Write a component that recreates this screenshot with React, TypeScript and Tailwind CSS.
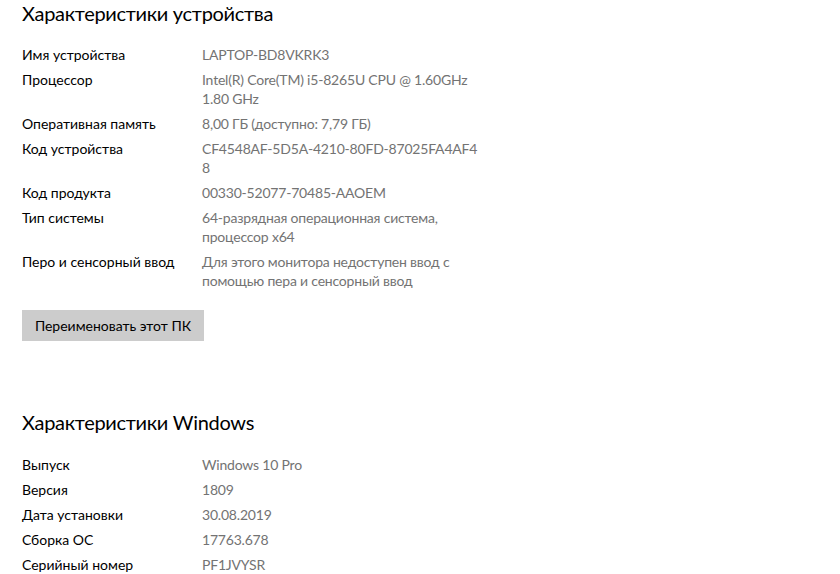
import React from "react";

type Row = { label: string; value: string[] };

const device: Row[] = [
  { label: "Имя устройства", value: ["LAPTOP-BD8VKRK3"] },
  { label: "Процессор", value: ["Intel(R) Core(TM) i5-8265U CPU @ 1.60GHz", "1.80 GHz"] },
  { label: "Оперативная память", value: ["8,00 ГБ (доступно: 7,79 ГБ)"] },
  { label: "Код устройства", value: ["CF4548AF-5D5A-4210-80FD-87025FA4AF4", "8"] },
  { label: "Код продукта", value: ["00330-52077-70485-AAOEM"] },
  { label: "Тип системы", value: ["64-разрядная операционная система,", "процессор x64"] },
  { label: "Перо и сенсорный ввод", value: ["Для этого монитора недоступен ввод с", "помощью пера и сенсорный ввод"] },
];

const windows: Row[] = [
  { label: "Выпуск", value: ["Windows 10 Pro"] },
  { label: "Версия", value: ["1809"] },
  { label: "Дата установки", value: ["30.08.2019"] },
  { label: "Сборка ОС", value: ["17763.678"] },
  { label: "Серийный номер", value: ["PF1JVYSR"] },
];

const Spec = ({ rows }: { rows: Row[] }) => (
  <div className="flex flex-col gap-[6px]">
    {rows.map((r) => (
      <div key={r.label} className="grid grid-cols-[180px_1fr] text-[14px] leading-[19px]">
        <div className="text-black">{r.label}</div>
        <div className="text-[#737373] tracking-[-0.2px]">
          {r.value.map((v) => (
            <div key={v}>{v}</div>
          ))}
        </div>
      </div>
    ))}
  </div>
);

export default function App() {
  return (
    <div className="w-[840px] h-[574px] overflow-hidden bg-white pl-[22px] pt-px font-['Lato','Noto_Sans',sans-serif]">
      <h2 className="text-[20px] tracking-[-0.3px] leading-[24px] font-normal text-black">
        Характеристики устройства
      </h2>
      <div className="mt-[20px]">
        <Spec rows={device} />
      </div>
      <button className="mt-[20px] w-[182px] h-[31px] bg-[#cccccc] text-[14px] text-black">
        Переименовать этот ПК
      </button>
      <h2 className="mt-[69px] text-[20px] tracking-[-0.3px] leading-[24px] font-normal text-black">
        Характеристики Windows
      </h2>
      <div className="mt-[21px]">
        <Spec rows={windows} />
      </div>
    </div>
  );
}
